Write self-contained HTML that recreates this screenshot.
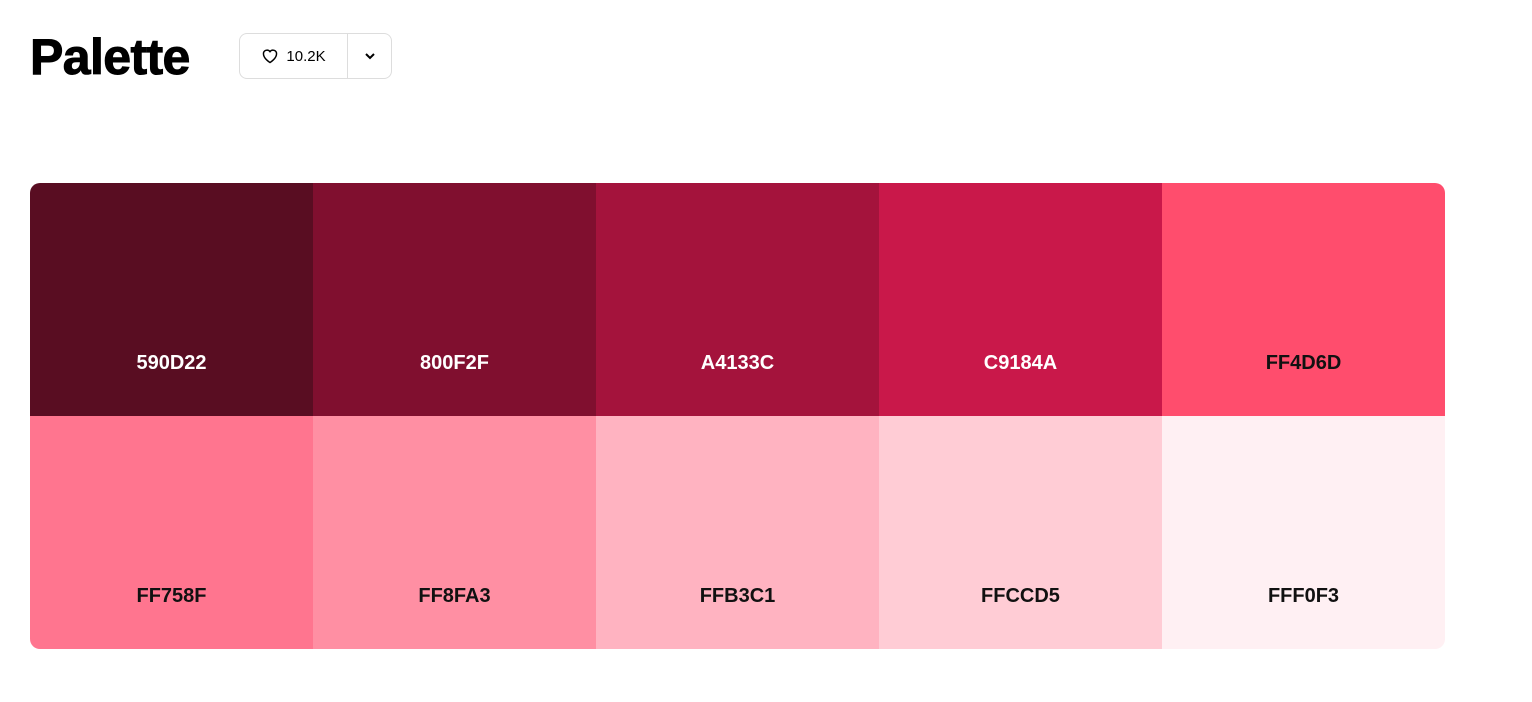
<!DOCTYPE html>
<html><head><style>
body{margin:0;background:#fff;font-family:"Liberation Sans",sans-serif;}
h1{position:absolute;left:30px;top:27px;margin:0;font-size:50px;font-weight:bold;letter-spacing:-0.6px;line-height:60px;color:#000;-webkit-text-stroke:1px #000}
.btn{position:absolute;left:239px;top:33px;width:153px;height:46px;border:1px solid #ddd;border-radius:8px;box-sizing:border-box;display:flex}
.b1{width:107px;border-right:1px solid #ddd;display:flex;align-items:center;justify-content:center;font-size:15px;gap:7px}
.b2{flex:1;display:flex;align-items:center;justify-content:center}
.pal{position:absolute;left:30px;top:183px;width:1415px;height:466px;border-radius:10px;overflow:hidden;display:grid;grid-template-columns:repeat(5,283px);grid-template-rows:233px 233px}
.pal div{display:flex;align-items:flex-end;justify-content:center;padding-bottom:41px;box-sizing:border-box;font-size:20px;font-weight:bold;color:#111}
.w{color:#fff!important}
</style></head><body>
<h1>Palette</h1>
<div class="btn"><div class="b1"><svg width="18" height="16" viewBox="0 0 24 22"><path d="M12 20s-9-5.5-9-12A5 5 0 0 1 12 5a5 5 0 0 1 9 3c0 6.5-9 12-9 12z" fill="none" stroke="#000" stroke-width="2"/></svg>10.2K</div><div class="b2"><svg width="12" height="8" viewBox="0 0 12 8"><path d="M2 2l4 4 4-4" fill="none" stroke="#000" stroke-width="2"/></svg></div></div>
<div class="pal">
<div class="w" style="background:#590D22">590D22</div>
<div class="w" style="background:#800F2F">800F2F</div>
<div class="w" style="background:#A4133C">A4133C</div>
<div class="w" style="background:#C9184A">C9184A</div>
<div style="background:#FF4D6D">FF4D6D</div>
<div style="background:#FF758F">FF758F</div>
<div style="background:#FF8FA3">FF8FA3</div>
<div style="background:#FFB3C1">FFB3C1</div>
<div style="background:#FFCCD5">FFCCD5</div>
<div style="background:#FFF0F3">FFF0F3</div>
</div>
</body></html>
